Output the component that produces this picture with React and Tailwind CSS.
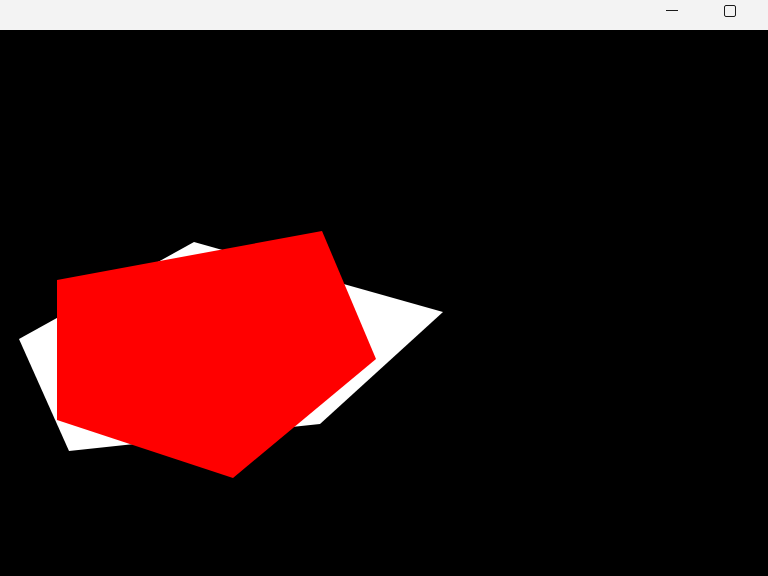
const RED = '57,250 322,201 376,329 233,448 57,390'
const WHITE = '194,212 443,282 320,394 69,421 19,309'

function TitleBar(){
  return (
    <div className="h-[30px] bg-[#f3f3f3] flex justify-end items-start pr-[9px]">
      <div className="w-[58px] h-[21px] flex items-center justify-center">
        <div className="w-[12px] h-px bg-[#1a1a1a]" />
      </div>
      <div className="w-[58px] h-[22px] flex items-center justify-center">
        <div className="w-[12px] h-[12px] border border-[#1a1a1a] rounded-[2px]" />
      </div>
    </div>
  )
}

export default function App(){
  return (
    <div className="w-[768px] h-[576px] flex flex-col bg-black overflow-hidden">
      <TitleBar />
      <div className="flex-1 bg-black">
        <svg width="768" height="546" viewBox="0 0 768 546" className="block">
          <polygon points={WHITE} fill="#ffffff" />
          <polygon points={RED} fill="#ff0000" />
        </svg>
      </div>
    </div>
  )
}
